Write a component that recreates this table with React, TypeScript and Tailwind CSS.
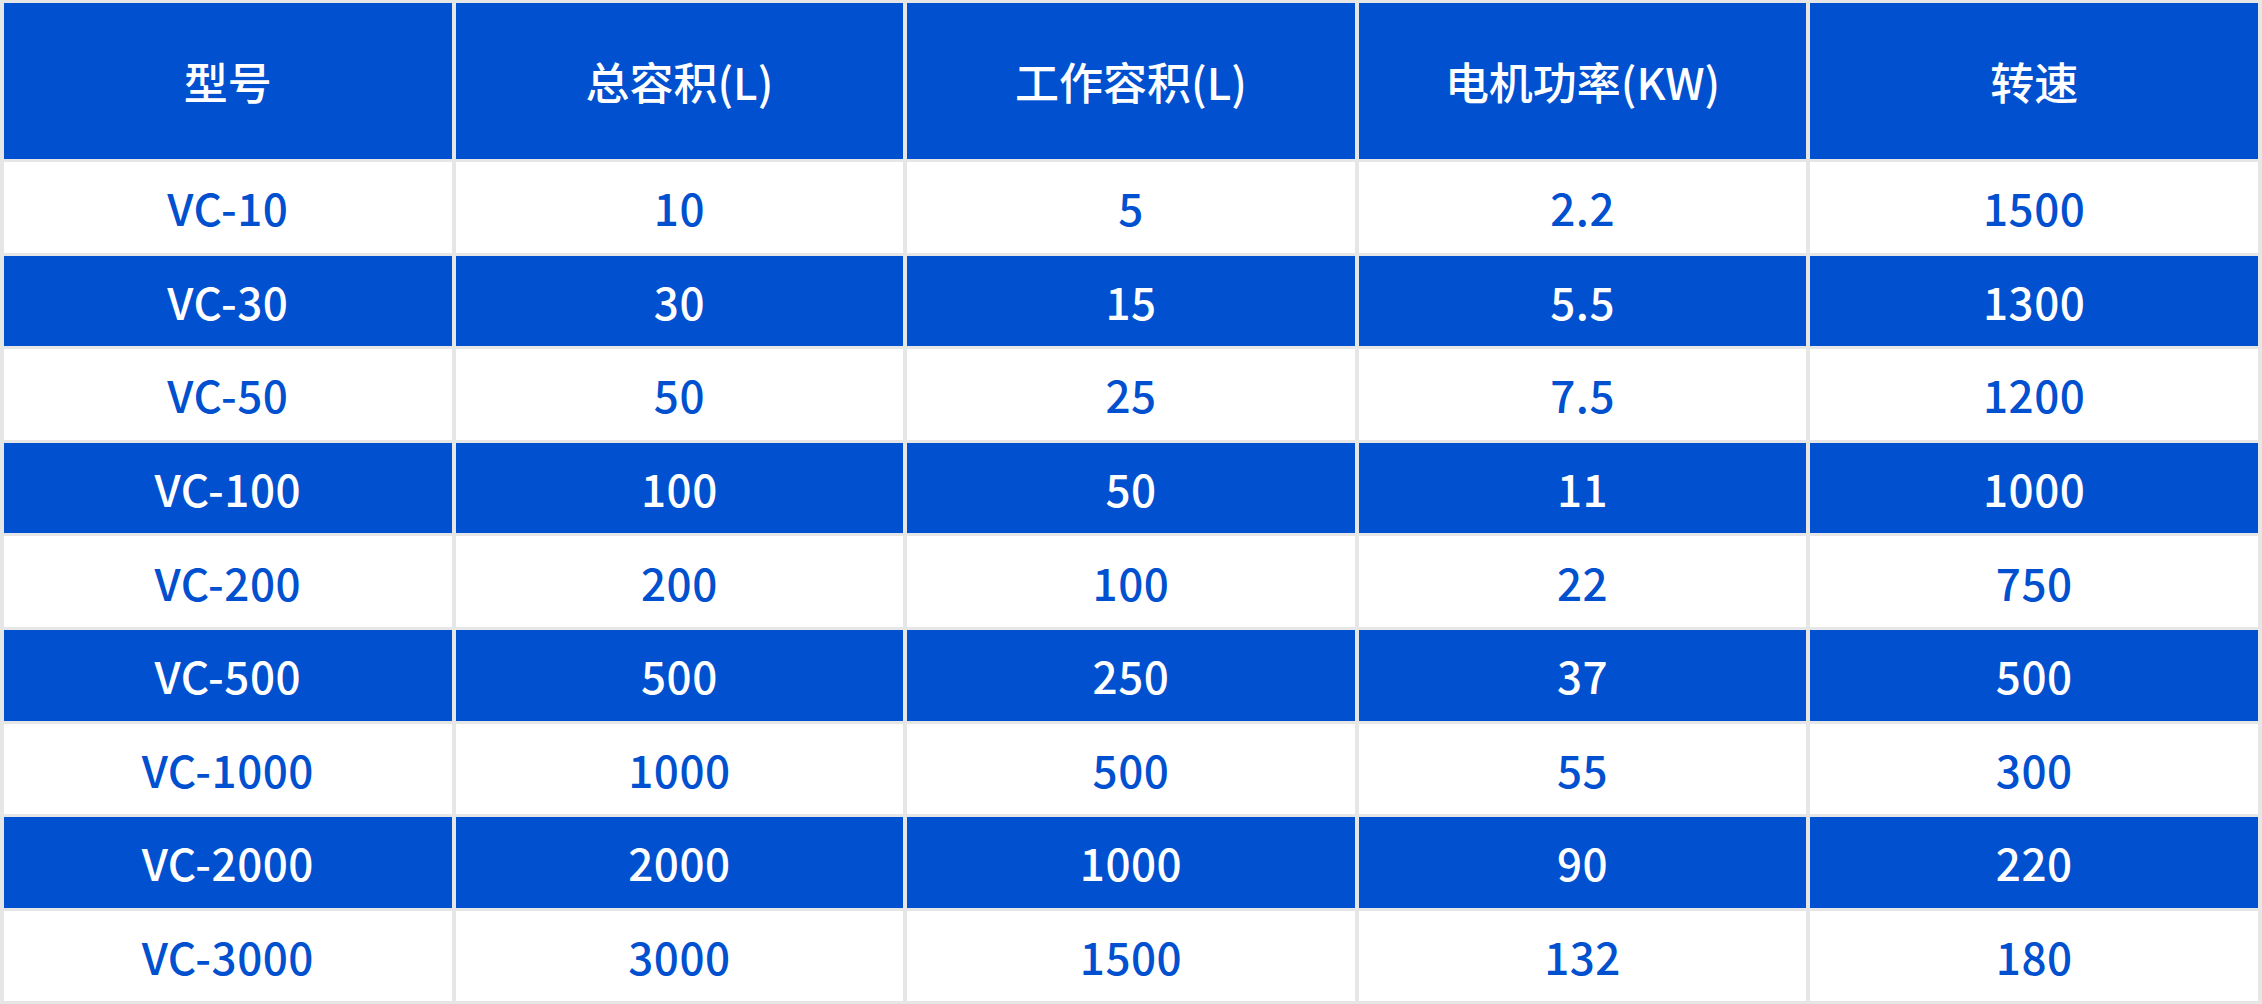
const headers = ["型号", "总容积(L)", "工作容积(L)", "电机功率(KW)", "转速"];

const rows = [
  ["VC-10", "10", "5", "2.2", "1500"],
  ["VC-30", "30", "15", "5.5", "1300"],
  ["VC-50", "50", "25", "7.5", "1200"],
  ["VC-100", "100", "50", "11", "1000"],
  ["VC-200", "200", "100", "22", "750"],
  ["VC-500", "500", "250", "37", "500"],
  ["VC-1000", "1000", "500", "55", "300"],
  ["VC-2000", "2000", "1000", "90", "220"],
  ["VC-3000", "3000", "1500", "132", "180"],
];

export default function App() {
  return (
    <div
      className="w-[2262px] h-[1004px] bg-[#e6e6e6] overflow-hidden"
      style={{ fontFamily: '"Noto Sans CJK SC", "Noto Sans", sans-serif' }}
    >
      <table className="w-full table-fixed border-separate border-spacing-x-[4px] border-spacing-y-[3px] text-[44px] font-medium">
        <thead>
          <tr className="h-[156px]">
            {headers.map((h) => (
              <th key={h} className="bg-[#0050cf] text-white font-medium text-center align-middle">
                {h}
              </th>
            ))}
          </tr>
        </thead>
        <tbody>
          {rows.map((row, i) => (
            <tr key={row[0]} className="h-[90.6px]">
              {row.map((cell, j) => (
                <td
                  key={j}
                  className={
                    i % 2 === 0
                      ? "bg-white text-[#0050cf] text-center align-middle tracking-[0.5px]"
                      : "bg-[#0050cf] text-white text-center align-middle tracking-[0.5px]"
                  }
                >
                  {cell}
                </td>
              ))}
            </tr>
          ))}
        </tbody>
      </table>
    </div>
  );
}
